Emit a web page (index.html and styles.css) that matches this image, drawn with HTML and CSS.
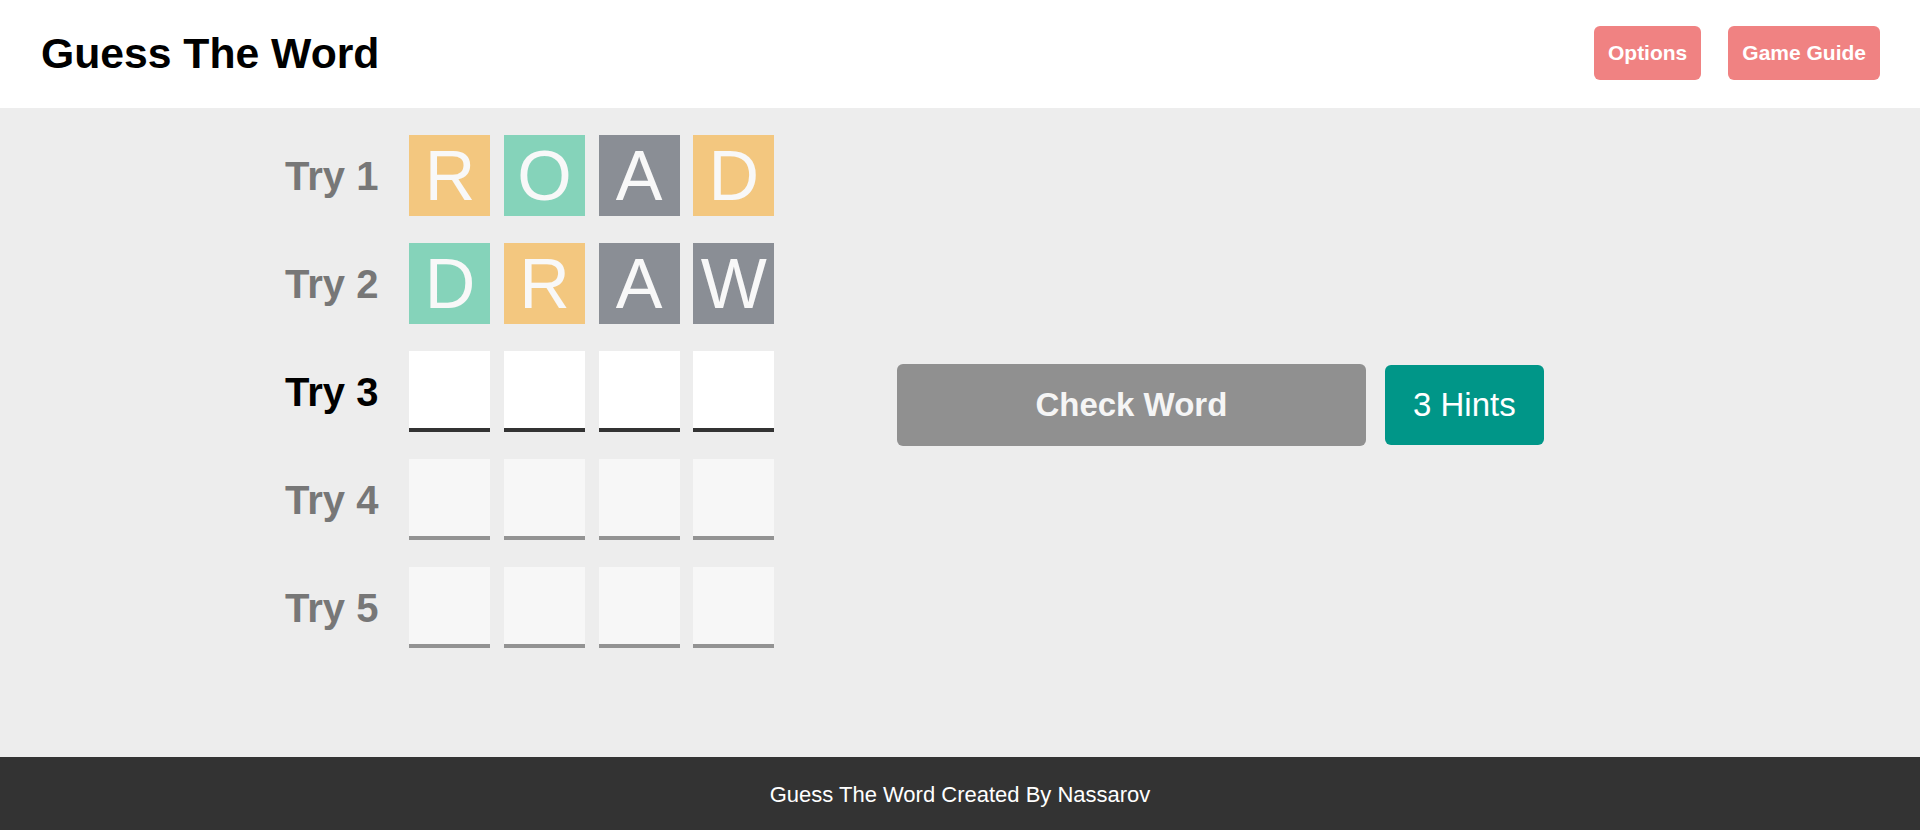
FILE: index.html
```html
<!DOCTYPE html>
<html lang="en">
<head>
<meta charset="utf-8">
<title>Guess The Word</title>
<link rel="stylesheet" href="styles.css">
</head>
<body>
<header class="site-header">
  <h1 class="title">Guess The Word</h1>
  <nav class="header-actions">
    <button class="pill-btn">Options</button>
    <button class="pill-btn">Game Guide</button>
  </nav>
</header>
<main class="game">
  <section class="guess-area">
    <div class="try-row done">
      <span class="try-label">Try 1</span>
      <div class="tiles">
        <span class="tile wrong-place">R</span>
        <span class="tile right-place">O</span>
        <span class="tile not-in">A</span>
        <span class="tile wrong-place">D</span>
      </div>
    </div>
    <div class="try-row done">
      <span class="try-label">Try 2</span>
      <div class="tiles">
        <span class="tile right-place">D</span>
        <span class="tile wrong-place">R</span>
        <span class="tile not-in">A</span>
        <span class="tile not-in">W</span>
      </div>
    </div>
    <div class="try-row active">
      <span class="try-label">Try 3</span>
      <div class="tiles">
        <span class="tile"></span>
        <span class="tile"></span>
        <span class="tile"></span>
        <span class="tile"></span>
      </div>
    </div>
    <div class="try-row disabled">
      <span class="try-label">Try 4</span>
      <div class="tiles">
        <span class="tile"></span>
        <span class="tile"></span>
        <span class="tile"></span>
        <span class="tile"></span>
      </div>
    </div>
    <div class="try-row disabled">
      <span class="try-label">Try 5</span>
      <div class="tiles">
        <span class="tile"></span>
        <span class="tile"></span>
        <span class="tile"></span>
        <span class="tile"></span>
      </div>
    </div>
  </section>
  <section class="controls">
    <button class="check-btn">Check Word</button>
    <button class="hint-btn">3 Hints</button>
  </section>
</main>
<footer class="site-footer">Guess The Word Created By Nassarov</footer>
</body>
</html>
```

FILE: styles.css
```css
* { box-sizing: border-box; }
html, body { margin: 0; padding: 0; }
body {
  height: 100vh;
  display: flex;
  flex-direction: column;
  font-family: "Liberation Sans", Arial, sans-serif;
  background: #ededed;
}
.site-header {
  height: 108px;
  flex: none;
  background: #fff;
  display: flex;
  align-items: center;
  justify-content: space-between;
  padding: 0 40px 0 41px;
}
.title {
  margin: 0 0 1px 0;
  font-size: 42.7px;
  font-weight: bold;
  color: #000;
  line-height: 1;
}
.header-actions {
  display: flex;
  gap: 27px;
  margin-bottom: 3px;
}
.pill-btn {
  font-family: inherit;
  border: none;
  background: #f08282;
  color: #fff;
  font-weight: bold;
  font-size: 21px;
  height: 54px;
  padding: 0 14px;
  border-radius: 6px;
  line-height: 1;
}
.game {
  flex: 1;
  display: flex;
  align-items: flex-start;
  padding-left: 285px;
}
.guess-area {
  padding-top: 27px;
  display: flex;
  flex-direction: column;
  gap: 27px;
}
.try-row {
  display: flex;
  align-items: center;
}
.try-label {
  font-size: 40px;
  font-weight: bold;
  color: #777;
  margin-right: 31px;
  line-height: 1;
}
.active .try-label { color: #000; }
.tiles {
  display: flex;
  gap: 13.67px;
}
.tile {
  width: 81px;
  height: 81px;
  display: flex;
  align-items: center;
  justify-content: center;
  font-size: 70px;
  color: #f8f8f8;
  line-height: 1;
  background: #f7f7f7;
  border-bottom: 4px solid #939393;
}
.done .tile { border-bottom: none; }
.active .tile {
  background: #fff;
  border-bottom-color: #333;
}
.wrong-place { background: #f3c77f; }
.right-place { background: #85d3ba; }
.not-in { background: #8a8e95; }
.controls {
  margin-top: 256px;
  margin-left: 122.5px;
  display: flex;
  align-items: center;
  gap: 19px;
}
.check-btn {
  font-family: inherit;
  width: 469px;
  height: 82px;
  border: none;
  border-radius: 6px;
  background: #909090;
  color: #f5f5f5;
  font-weight: bold;
  font-size: 33px;
}
.hint-btn {
  font-family: inherit;
  width: 159px;
  height: 80px;
  border: none;
  border-radius: 6px;
  background: #009688;
  color: #fff;
  font-size: 33px;
}
.site-footer {
  flex: none;
  height: 73px;
  padding-top: 3px;
  background: #333;
  color: #fff;
  font-size: 22px;
  display: flex;
  align-items: center;
  justify-content: center;
}
```
